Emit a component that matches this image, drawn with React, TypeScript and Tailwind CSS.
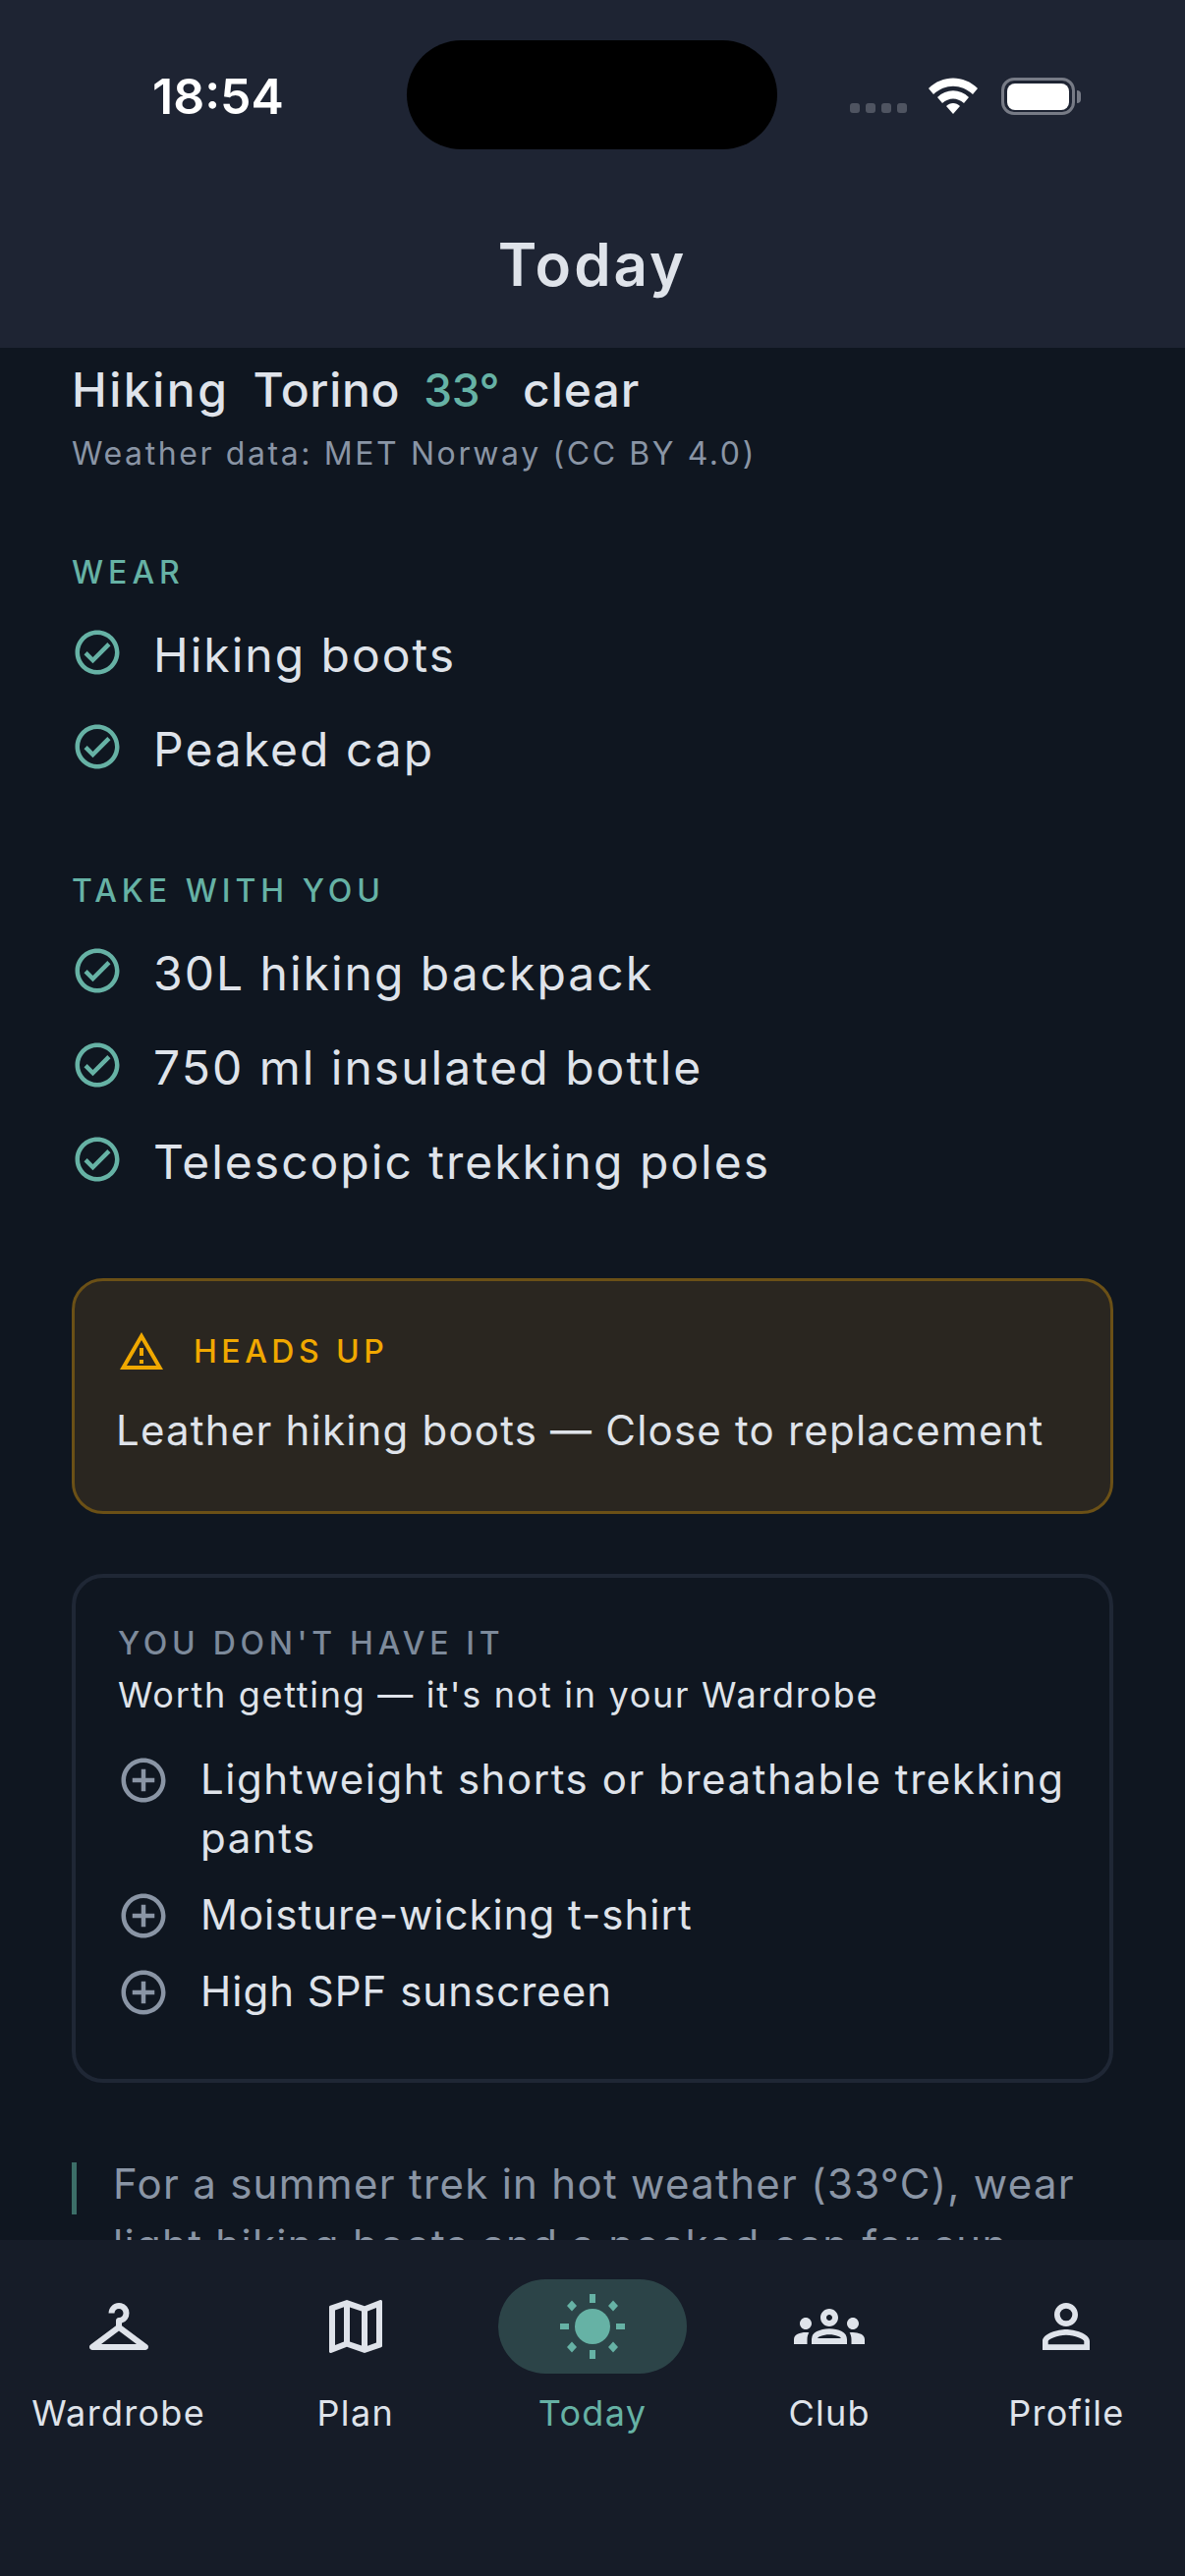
import { MdOutlineCheckroom, MdOutlineMap, MdOutlineGroups, MdOutlinePersonOutline, MdOutlineCheckCircle, MdOutlineWarningAmber, MdAddCircleOutline } from "react-icons/md";

const wear = ["Hiking boots", "Peaked cap"];
const take = ["30L hiking backpack", "750 ml insulated bottle", "Telescopic trekking poles"];
const missing = ["Moisture-wicking t-shirt", "High SPF sunscreen"];

function CheckRow({ label }: { label: string }) {
  return (
    <div className="flex items-center h-[96px]">
      <MdOutlineCheckCircle className="shrink-0 w-[54px] h-[54px] text-[#66b2a5] -mt-[6px] ml-[-1px] mr-[30px]" />
      <span className="text-[48px] leading-[60px] tracking-[2px] text-[#dfe3ea]">{label}</span>
    </div>
  );
}

function SunIcon() {
  return (
    <svg viewBox="0 0 72 72" className="w-[72px] h-[72px] text-[#66b2a5]" fill="currentColor">
      <circle cx="36" cy="36" r="18" />
      <rect x="33" y="3" width="6" height="9" />
      <rect x="33" y="60" width="6" height="9" />
      <rect x="3" y="33" width="9" height="6" />
      <rect x="60" y="33" width="9" height="6" />
      <path d="M15 9.500 20 15 15 20.500 10 15z" />
      <path d="M57 9.500 62 15 57 20.500 52 15z" />
      <path d="M15 51.500 20 57 15 62.500 10 57z" />
      <path d="M57 51.500 62 57 57 62.500 52 57z" />
    </svg>
  );
}

const tabs = [
  { label: "Wardrobe", Icon: MdOutlineCheckroom },
  { label: "Plan", Icon: MdOutlineMap },
  { label: "Today", Icon: SunIcon, active: true },
  { label: "Club", Icon: MdOutlineGroups },
  { label: "Profile", Icon: MdOutlinePersonOutline },
];

export default function App() {
  return (
    <div className="flex flex-col w-[1206px] h-[2622px] overflow-hidden bg-[#0f1620] font-['Inter','Liberation_Sans',sans-serif] text-[#dfe3ea]">
      {/* header + status bar */}
      <header className="relative shrink-0 h-[354px] bg-[#1e2433]">
        <div className="flex items-center justify-between h-[196px] pl-[155px] pr-[106px]">
          <span className="text-[50px] font-semibold text-white">18:54</span>
          <div className="flex items-center">
            <div className="flex gap-[6px] mt-[24px] mr-[22px]">
              <i className="block w-[10px] h-[10px] rounded-[3px] bg-[#4f5461]" />
              <i className="block w-[10px] h-[10px] rounded-[3px] bg-[#4f5461]" />
              <i className="block w-[10px] h-[10px] rounded-[3px] bg-[#4f5461]" />
              <i className="block w-[10px] h-[10px] rounded-[3px] bg-[#4f5461]" />
            </div>
            <svg viewBox="0 0 50 38" className="w-[50px] h-[38px] mr-[24px]" fill="white">
              <path d="M0 11C14-3 36-3 50 11L45 17C33 6 17 6 5 17z" />
              <path d="M9 20C18 11 32 11 41 20L36 26C29 20 21 20 14 26z" />
              <path d="M18 29C22 25 28 25 32 29L25 37z" />
            </svg>
            <div className="flex items-center">
              <div className="flex items-center justify-center w-[75px] h-[38px] rounded-[13px] border-[3px] border-[#777b86]">
                <div className="w-[63px] h-[27px] rounded-[8px] bg-white" />
              </div>
              <div className="w-[4px] h-[13px] ml-[2px] rounded-r-full bg-[#777b86]" />
            </div>
          </div>
        </div>
        <div className="absolute left-[414px] top-[41px] w-[377px] h-[111px] rounded-[56px] bg-black" />
        <h1 className="text-center text-[60px] leading-[72px] font-semibold tracking-[3px] text-[#dfe3ea] mt-[37px]">Today</h1>
      </header>

      {/* scrolled content */}
      <main className="flex-1 min-h-0 overflow-hidden px-[73px] pt-[15px]">
        <div className="flex items-center gap-[24px] text-[48px] leading-[56px] font-medium">
          <span className="tracking-[2.5px]">Hiking</span>
          <span className="tracking-[0.7px]">Torino</span>
          <span className="text-[46px] tracking-[-0.5px] text-[#66b2a5]">33°</span>
          <span className="tracking-[1px]">clear</span>
        </div>
        <p className="mt-[18px] text-[32px] leading-[38px] tracking-[2.6px] text-[#8a95a5]">Weather data: MET Norway (CC BY 4.0)</p>

        <h2 className="mt-[82px] text-[32px] leading-[40px] font-medium tracking-[5px] text-[#66b2a5]">WEAR</h2>
        <div className="mt-[16px]">
          {wear.map((w) => <CheckRow key={w} label={w} />)}
        </div>

        <h2 className="mt-[76px] text-[32px] leading-[40px] font-medium tracking-[5px] text-[#66b2a5]">TAKE WITH YOU</h2>
        <div className="mt-[16px]">
          {take.map((w) => <CheckRow key={w} label={w} />)}
        </div>

        <section className="mt-[70px] h-[240px] rounded-[32px] border-[3px] border-[#6b5016] bg-[#2a2620] pl-[42px] pr-[30px] pt-[48px]">
          <div className="flex items-center h-[48px]">
            <MdOutlineWarningAmber className="ml-[2px] w-[48px] h-[48px] text-[#f0a800] mr-[29px]" />
            <span className="text-[32px] font-medium tracking-[4.5px] text-[#f0a800]">HEADS UP</span>
          </div>
          <p className="mt-[28px] text-[42px] leading-[56px] tracking-[1.2px]">Leather hiking boots — Close to replacement</p>
        </section>

        <section className="mt-[61px] h-[518px] rounded-[32px] border-[4px] border-[#1f2735] pl-[43px] pr-[30px] pt-[47px]">
          <h3 className="text-[32px] leading-[40px] font-medium tracking-[4.7px] text-[#7d8a9b]">YOU DON'T HAVE IT</h3>
          <p className="mt-[10px] text-[36px] leading-[44px] tracking-[1.7px]">Worth getting — it's not in your Wardrobe</p>
          <div className="mt-[34px] flex items-start">
            <MdAddCircleOutline className="shrink-0 w-[54px] h-[54px] text-[#8a95a5] mr-[31px] -ml-[1px] mt-[4px]" />
            <span className="text-[42px] leading-[60px] tracking-[1.55px]">Lightweight shorts or breathable trekking pants</span>
          </div>
          {missing.map((m) => (
            <div key={m} className="mt-[18px] flex items-start">
              <MdAddCircleOutline className="shrink-0 w-[54px] h-[54px] text-[#8a95a5] mr-[31px] -ml-[1px] mt-[4px]" />
              <span className="text-[42px] leading-[60px] tracking-[1px]">{m}</span>
            </div>
          ))}
        </section>

        <div className="mt-[81px] flex gap-[37px]">
          <div className="shrink-0 w-[5px] h-[53px] bg-[#3c6e68]" />
          <p className="-mt-[9px] text-[42px] leading-[62px] tracking-[1.3px] text-[#8a95a5]">For a summer trek in hot weather (33°C), wear light hiking boots and a peaked cap for sun</p>
        </div>
      </main>

      {/* tab bar */}
      <nav className="shrink-0 h-[342px] bg-[#161c28] grid grid-cols-5 pt-[40px]">
        {tabs.map(({ label, Icon, active }) => (
          <div key={label} className="flex flex-col items-center">
            <div className={`flex items-center justify-center w-[192px] h-[96px] rounded-full ${active ? "bg-[#2c4448]" : ""}`}>
              <Icon className="w-[72px] h-[72px] text-[#dfe3ea]" />
            </div>
            <span className={`mt-[16px] text-[36px] leading-[48px] tracking-[1.3px] ${active ? "text-[#66b2a5]" : "text-[#dfe3ea]"}`}>{label}</span>
          </div>
        ))}
      </nav>
    </div>
  );
}
